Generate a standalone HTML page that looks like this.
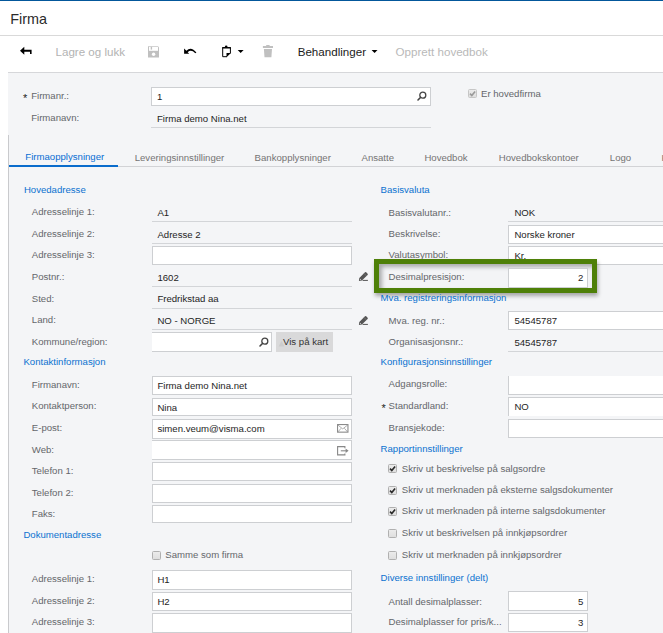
<!DOCTYPE html>
<html><head><meta charset="utf-8"><style>
html,body{margin:0;padding:0;}
body{width:663px;height:633px;position:relative;overflow:hidden;background:#fff;font-family:"Liberation Sans", sans-serif;}
.t{position:absolute;white-space:nowrap;line-height:1;}
.r{position:absolute;}
</style></head><body>
<div class="r" style="left:0.00px;top:0.00px;width:663.00px;height:1.00px;background:#03579b"></div>
<div class="t" style="left:10.20px;top:11.81px;font-size:14.4px;color:#2b2b2b;">Firma</div>
<div class="r" style="left:0.00px;top:35.00px;width:663.00px;height:1.00px;background:#d9d9d9"></div>
<div class="r" style="left:8.00px;top:72.00px;width:655.00px;height:561.00px;background:#f4f5f7;border-top:1px solid #d6d7da;box-sizing:border-box"></div>
<div class="r" style="left:8.00px;top:135.00px;width:1.00px;height:498.00px;background:#c9cacd"></div>
<div class="t" style="left:55.50px;top:46.18px;font-size:11.6px;color:#b3b3b3;">Lagre og lukk</div>
<div class="t" style="left:297.70px;top:46.18px;font-size:11.6px;color:#1a1a1a;">Behandlinger</div>
<div class="t" style="left:395.60px;top:46.18px;font-size:11.6px;color:#b9b9b9;">Opprett hovedbok</div>
<svg class="r" style="left:0;top:0" width="663" height="72" viewBox="0 0 663 72">
<path d="M20 50.8 L24.3 46.8 L24.3 49.8 L31.6 49.8 L31.6 54 L30 54 L30 51.8 L24.3 51.8 L24.3 54.8 Z" fill="#000"/>
<path d="M148 46.2 H158 L159 47.2 V57.4 H148 Z" fill="#c0c0c0"/>
<rect x="149" y="46.9" width="9" height="3.9" fill="#fff"/>
<rect x="150.7" y="46.8" width="1.4" height="2.8" fill="#c0c0c0"/>
<circle cx="153.6" cy="54.3" r="1.7" fill="#fff"/>
<path d="M184.1 48.5 L186.4 50.7 Q191.2 46.0 196.4 52.6 L195.3 53.2 Q191 49.0 187.7 52.3 L189.2 53.8 L184.1 53.8 Z" fill="#000"/>
<path d="M230.4 53.4 V47.8 H222.7 V56.7 H227" fill="none" stroke="#000" stroke-width="1"/>
<rect x="222.2" y="47.1" width="8.7" height="1.2" fill="#000"/>
<ellipse cx="226.2" cy="46.5" rx="1.3" ry="1.1" fill="#000"/>
<path d="M226.5 53.1 H230.9 L226.5 57.2 Z" fill="#000"/>
<path d="M237.7 50 H243.6 L240.65 52.9 Z" fill="#000"/>
<path d="M262.9 46 H273 V47.9 H262.9 Z M266.2 45 H269.6 V46 H266.2 Z M263.9 48.9 H272 L271.4 57.2 H264.5 Z" fill="#c0c0c0"/>
<path d="M371.6 50 H377.5 L374.55 52.9 Z" fill="#000"/>
</svg>
<div class="t" style="left:22.90px;top:93.49px;font-size:11px;color:#222;">*</div>
<div class="t" style="left:31.20px;top:90.77px;font-size:9.6px;color:#64676b;">Firmanr.:</div>
<div class="r" style="left:151.00px;top:87.00px;width:280.00px;height:19.00px;background:#fff;box-sizing:border-box;border-top:1px solid #cdcfd2;border-bottom:1px solid #cdcfd2;border-left:1px solid #cdcfd2;border-right:1px solid #cdcfd2"></div>
<div class="t" style="left:157.00px;top:91.77px;font-size:9.6px;color:#1e1e1e;">1</div>
<div class="t" style="left:31.20px;top:112.67px;font-size:9.6px;color:#64676b;">Firmanavn:</div>
<div class="t" style="left:157.00px;top:113.77px;font-size:9.6px;color:#1e1e1e;">Firma demo Nina.net</div>
<div class="r" style="left:151.00px;top:127.00px;width:280.00px;height:1.00px;background:#d3d5d8"></div>
<svg class="r" style="left:415.50px;top:89.80px" width="12" height="12" viewBox="0 0 12 12"><circle cx="6.8" cy="5.2" r="3" fill="none" stroke="#444" stroke-width="1.3"/><path d="M4.7 7.3 L2 10" stroke="#444" stroke-width="1.6" stroke-linecap="round"/></svg>
<svg class="r" style="left:468.00px;top:89.00px" width="9" height="9" viewBox="0 0 9 9"><defs><linearGradient id="g" x1="0" y1="0" x2="0" y2="1"><stop offset="0" stop-color="#ececec"/><stop offset="1" stop-color="#dedede"/></linearGradient></defs><rect x="0.5" y="0.5" width="8" height="8" rx="1" fill="url(#g)" stroke="#c6c6c6"/><path d="M2 4.6 L3.8 6.5 L7.1 2.4" fill="none" stroke="#9a9a9a" stroke-width="1.6"/></svg>
<div class="t" style="left:481.00px;top:88.87px;font-size:9.6px;color:#64676b;">Er hovedfirma</div>
<div class="t" style="left:25.30px;top:152.27px;font-size:9.6px;color:#086ed4;">Firmaopplysninger</div>
<div class="t" style="left:134.70px;top:153.07px;font-size:9.6px;color:#747474;">Leveringsinnstillinger</div>
<div class="t" style="left:254.60px;top:153.07px;font-size:9.6px;color:#747474;">Bankopplysninger</div>
<div class="t" style="left:361.50px;top:153.07px;font-size:9.6px;color:#747474;">Ansatte</div>
<div class="t" style="left:424.40px;top:153.07px;font-size:9.6px;color:#747474;">Hovedbok</div>
<div class="t" style="left:498.80px;top:153.07px;font-size:9.6px;color:#747474;">Hovedbokskontoer</div>
<div class="t" style="left:609.80px;top:153.07px;font-size:9.6px;color:#747474;">Logo</div>
<div class="t" style="left:661.50px;top:153.07px;font-size:9.6px;color:#747474;">Kontakt</div>
<div class="r" style="left:9.00px;top:166.00px;width:654.00px;height:1.00px;background:#d2d3d6"></div>
<div class="r" style="left:9.00px;top:165.00px;width:109.00px;height:2.00px;background:#0a6ccc"></div>
<div class="t" style="left:23.90px;top:185.07px;font-size:9.6px;color:#0b72d0;">Hovedadresse</div>
<div class="t" style="left:31.80px;top:207.27px;font-size:9.6px;color:#64676b;">Adresselinje 1:</div>
<div class="t" style="left:157.40px;top:208.27px;font-size:9.6px;color:#1e1e1e;">A1</div>
<div class="r" style="left:152.00px;top:221.00px;width:200.00px;height:1.00px;background:#d3d5d8"></div>
<div class="t" style="left:31.80px;top:229.17px;font-size:9.6px;color:#64676b;">Adresselinje 2:</div>
<div class="t" style="left:157.40px;top:230.07px;font-size:9.6px;color:#1e1e1e;">Adresse 2</div>
<div class="r" style="left:152.00px;top:243.00px;width:200.00px;height:1.00px;background:#d3d5d8"></div>
<div class="t" style="left:31.80px;top:249.87px;font-size:9.6px;color:#64676b;">Adresselinje 3:</div>
<div class="r" style="left:152.00px;top:246.00px;width:200.00px;height:19.00px;background:#fff;box-sizing:border-box;border-top:1px solid #cdcfd2;border-bottom:1px solid #cdcfd2;border-left:1px solid #cdcfd2;border-right:1px solid #cdcfd2"></div>
<div class="t" style="left:31.80px;top:271.77px;font-size:9.6px;color:#64676b;">Postnr.:</div>
<div class="t" style="left:157.40px;top:272.67px;font-size:9.6px;color:#1e1e1e;">1602</div>
<div class="r" style="left:152.00px;top:286.00px;width:200.00px;height:1.00px;background:#d3d5d8"></div>
<div class="t" style="left:31.80px;top:293.97px;font-size:9.6px;color:#64676b;">Sted:</div>
<div class="t" style="left:157.40px;top:294.07px;font-size:9.6px;color:#1e1e1e;">Fredrikstad aa</div>
<div class="r" style="left:152.00px;top:308.00px;width:200.00px;height:1.00px;background:#d3d5d8"></div>
<div class="t" style="left:31.80px;top:315.27px;font-size:9.6px;color:#64676b;">Land:</div>
<div class="t" style="left:157.40px;top:316.27px;font-size:9.6px;color:#1e1e1e;">NO - NORGE</div>
<div class="r" style="left:152.00px;top:329.00px;width:200.00px;height:1.00px;background:#d3d5d8"></div>
<div class="t" style="left:31.80px;top:336.57px;font-size:9.6px;color:#64676b;">Kommune/region:</div>
<div class="r" style="left:152.00px;top:332.00px;width:120.00px;height:20.00px;background:#fff;box-sizing:border-box;border-top:1px solid #cdcfd2;border-bottom:1px solid #cdcfd2;border-left:0;border-right:1px solid #cdcfd2"></div>
<svg class="r" style="left:257.50px;top:335.80px" width="12" height="12" viewBox="0 0 12 12"><circle cx="6.8" cy="5.2" r="3" fill="none" stroke="#444" stroke-width="1.3"/><path d="M4.7 7.3 L2 10" stroke="#444" stroke-width="1.6" stroke-linecap="round"/></svg>
<div class="r" style="left:276.00px;top:332.00px;width:57.00px;height:20.00px;background:#d9d9da"></div>
<svg class="r" style="left:277px;top:336px" width="10" height="12" viewBox="0 0 10 12"><path d="M1.5 10.5 L4.5 5 L7.5 10.5 Z" fill="#cdcdcd"/></svg>
<div class="t" style="left:283.00px;top:337.17px;font-size:9.6px;color:#333;">Vis på kart</div>
<svg class="r" style="left:356.00px;top:269.00px" width="16" height="16" viewBox="0 0 16 16"><path d="M2.9 12.0 L3.3 9.0 L9.0 3.3 Q9.6 2.7 10.2 3.3 L11.6 4.7 Q12.2 5.3 11.6 5.9 L5.9 11.6 Z" fill="#555"/><path d="M3.9 11.0 L4.2 9.8 L5.1 10.7 Z" fill="#f4f5f7"/><path d="M8.0 4.4 L10.5 6.9" stroke="#888" stroke-width="0.6"/><rect x="6.6" y="10.9" width="5.3" height="1.0" fill="#555"/></svg>
<svg class="r" style="left:356.00px;top:313.00px" width="16" height="16" viewBox="0 0 16 16"><path d="M2.9 12.0 L3.3 9.0 L9.0 3.3 Q9.6 2.7 10.2 3.3 L11.6 4.7 Q12.2 5.3 11.6 5.9 L5.9 11.6 Z" fill="#555"/><path d="M3.9 11.0 L4.2 9.8 L5.1 10.7 Z" fill="#f4f5f7"/><path d="M8.0 4.4 L10.5 6.9" stroke="#888" stroke-width="0.6"/><rect x="6.6" y="10.9" width="5.3" height="1.0" fill="#555"/></svg>
<div class="t" style="left:23.40px;top:357.27px;font-size:9.6px;color:#0b72d0;">Kontaktinformasjon</div>
<div class="t" style="left:31.80px;top:380.47px;font-size:9.6px;color:#64676b;">Firmanavn:</div>
<div class="r" style="left:152.00px;top:376.00px;width:200.00px;height:19.00px;background:#fff;box-sizing:border-box;border-top:1px solid #cdcfd2;border-bottom:1px solid #cdcfd2;border-left:1px solid #cdcfd2;border-right:1px solid #cdcfd2"></div>
<div class="t" style="left:157.40px;top:381.17px;font-size:9.6px;color:#1e1e1e;">Firma demo Nina.net</div>
<div class="t" style="left:31.80px;top:401.07px;font-size:9.6px;color:#64676b;">Kontaktperson:</div>
<div class="r" style="left:152.00px;top:398.00px;width:200.00px;height:18.00px;background:#fff;box-sizing:border-box;border-top:1px solid #cdcfd2;border-bottom:1px solid #cdcfd2;border-left:1px solid #cdcfd2;border-right:1px solid #cdcfd2"></div>
<div class="t" style="left:157.40px;top:402.67px;font-size:9.6px;color:#1e1e1e;">Nina</div>
<div class="t" style="left:31.80px;top:423.27px;font-size:9.6px;color:#64676b;">E-post:</div>
<div class="r" style="left:152.00px;top:419.00px;width:200.00px;height:20.00px;background:#fff;box-sizing:border-box;border-top:1px solid #cdcfd2;border-bottom:1px solid #cdcfd2;border-left:1px solid #cdcfd2;border-right:1px solid #cdcfd2"></div>
<div class="t" style="left:157.40px;top:424.47px;font-size:9.6px;color:#1e1e1e;">simen.veum@visma.com</div>
<div class="t" style="left:31.80px;top:444.77px;font-size:9.6px;color:#64676b;">Web:</div>
<div class="r" style="left:152.00px;top:440.00px;width:200.00px;height:20.00px;background:#fff;box-sizing:border-box;border-top:1px solid #cdcfd2;border-bottom:1px solid #cdcfd2;border-left:0;border-right:1px solid #cdcfd2"></div>
<div class="t" style="left:31.80px;top:466.27px;font-size:9.6px;color:#64676b;">Telefon 1:</div>
<div class="r" style="left:152.00px;top:462.00px;width:200.00px;height:19.00px;background:#fff;box-sizing:border-box;border-top:1px solid #cdcfd2;border-bottom:1px solid #cdcfd2;border-left:1px solid #cdcfd2;border-right:1px solid #cdcfd2"></div>
<div class="t" style="left:31.80px;top:488.17px;font-size:9.6px;color:#64676b;">Telefon 2:</div>
<div class="r" style="left:152.00px;top:484.00px;width:200.00px;height:19.00px;background:#fff;box-sizing:border-box;border-top:1px solid #cdcfd2;border-bottom:1px solid #cdcfd2;border-left:1px solid #cdcfd2;border-right:1px solid #cdcfd2"></div>
<div class="t" style="left:31.80px;top:508.87px;font-size:9.6px;color:#64676b;">Faks:</div>
<div class="r" style="left:152.00px;top:505.00px;width:200.00px;height:18.00px;background:#fff;box-sizing:border-box;border-top:1px solid #cdcfd2;border-bottom:1px solid #cdcfd2;border-left:1px solid #cdcfd2;border-right:1px solid #cdcfd2"></div>
<svg class="r" style="left:336.5px;top:424px" width="12" height="9" viewBox="0 0 12 9"><rect x="0.55" y="0.55" width="10.4" height="7.6" fill="none" stroke="#8a8a8a" stroke-width="1.1"/><path d="M0.6 0.8 L5.75 4.9 L10.9 0.8 M0.8 8 L4.2 4.2 M10.7 8 L7.3 4.2" fill="none" stroke="#9a9a9a" stroke-width="0.8"/></svg>
<svg class="r" style="left:337px;top:445.5px" width="12" height="10" viewBox="0 0 12 10"><path d="M7.9 2.2 V0.6 H0.6 V8.9 H7.9 V7.4" fill="none" stroke="#888" stroke-width="1.1"/><path d="M3.8 4.8 H9" stroke="#888" stroke-width="1.1"/><path d="M8.6 2.6 L11.6 4.8 L8.6 7 Z" fill="#888"/></svg>
<div class="t" style="left:23.40px;top:530.27px;font-size:9.6px;color:#0b72d0;">Dokumentadresse</div>
<svg class="r" style="left:152.30px;top:551.10px" width="9" height="9" viewBox="0 0 9 9"><defs><linearGradient id="g" x1="0" y1="0" x2="0" y2="1"><stop offset="0" stop-color="#ececec"/><stop offset="1" stop-color="#dedede"/></linearGradient></defs><rect x="0.5" y="0.5" width="8" height="8" rx="1" fill="url(#g)" stroke="#b0b0b0"/></svg>
<div class="t" style="left:165.30px;top:550.07px;font-size:9.6px;color:#64676b;">Samme som firma</div>
<div class="t" style="left:31.80px;top:573.87px;font-size:9.6px;color:#64676b;">Adresselinje 1:</div>
<div class="r" style="left:152.00px;top:570.00px;width:200.00px;height:20.00px;background:#fff;box-sizing:border-box;border-top:1px solid #cdcfd2;border-bottom:1px solid #cdcfd2;border-left:1px solid #cdcfd2;border-right:1px solid #cdcfd2"></div>
<div class="t" style="left:157.40px;top:575.27px;font-size:9.6px;color:#1e1e1e;">H1</div>
<div class="t" style="left:31.80px;top:596.27px;font-size:9.6px;color:#64676b;">Adresselinje 2:</div>
<div class="r" style="left:152.00px;top:592.00px;width:200.00px;height:19.00px;background:#fff;box-sizing:border-box;border-top:1px solid #cdcfd2;border-bottom:1px solid #cdcfd2;border-left:1px solid #cdcfd2;border-right:1px solid #cdcfd2"></div>
<div class="t" style="left:157.40px;top:596.97px;font-size:9.6px;color:#1e1e1e;">H2</div>
<div class="t" style="left:31.80px;top:617.27px;font-size:9.6px;color:#64676b;">Adresselinje 3:</div>
<div class="r" style="left:152.00px;top:613.00px;width:200.00px;height:20.00px;background:#fff;box-sizing:border-box;border-top:1px solid #cdcfd2;border-bottom:1px solid #cdcfd2;border-left:1px solid #cdcfd2;border-right:1px solid #cdcfd2"></div>
<div class="t" style="left:380.60px;top:185.07px;font-size:9.6px;color:#0b72d0;">Basisvaluta</div>
<div class="t" style="left:388.60px;top:207.87px;font-size:9.6px;color:#64676b;">Basisvalutanr.:</div>
<div class="t" style="left:514.40px;top:208.07px;font-size:9.6px;color:#1e1e1e;">NOK</div>
<div class="r" style="left:508.00px;top:221.00px;width:200.00px;height:1.00px;background:#d3d5d8"></div>
<div class="t" style="left:388.60px;top:229.17px;font-size:9.6px;color:#64676b;">Beskrivelse:</div>
<div class="r" style="left:508.00px;top:225.00px;width:213.00px;height:19.00px;background:#fff;box-sizing:border-box;border-top:1px solid #cdcfd2;border-bottom:1px solid #cdcfd2;border-left:1px solid #cdcfd2;border-right:1px solid #cdcfd2"></div>
<div class="t" style="left:514.40px;top:230.27px;font-size:9.6px;color:#1e1e1e;">Norske kroner</div>
<div class="t" style="left:388.60px;top:250.27px;font-size:9.6px;color:#64676b;">Valutasymbol:</div>
<div class="r" style="left:508.00px;top:246.00px;width:213.00px;height:19.00px;background:#fff;box-sizing:border-box;border-top:1px solid #cdcfd2;border-bottom:1px solid #cdcfd2;border-left:1px solid #cdcfd2;border-right:1px solid #cdcfd2"></div>
<div class="t" style="left:514.40px;top:251.47px;font-size:9.6px;color:#1e1e1e;">Kr.</div>
<div class="r" style="left:374.00px;top:259.20px;width:223.00px;height:33.60px;border:5px solid #4e8008;box-sizing:border-box;background:#f3f4f6;box-shadow:1px 3px 4px rgba(0,0,0,0.32), inset 3px 3px 4px rgba(0,0,0,0.3)"></div>
<div class="t" style="left:388.60px;top:272.27px;font-size:9.6px;color:#64676b;">Desimalpresisjon:</div>
<div class="r" style="left:508.00px;top:268.00px;width:80.00px;height:20.00px;background:#fff;box-sizing:border-box;border-top:1px solid #cdcfd2;border-bottom:1px solid #cdcfd2;border-left:1px solid #cdcfd2;border-right:1px solid #cdcfd2"></div>
<div class="t" style="right:79.60px;top:273.47px;font-size:9.6px;color:#1e1e1e;">2</div>
<div class="t" style="left:380.60px;top:292.77px;font-size:9.6px;color:#0b72d0;">Mva. registreringsinformasjon</div>
<div class="t" style="left:388.60px;top:316.27px;font-size:9.6px;color:#64676b;">Mva. reg. nr.:</div>
<div class="r" style="left:508.00px;top:311.00px;width:213.00px;height:19.00px;background:#fff;box-sizing:border-box;border-top:1px solid #cdcfd2;border-bottom:1px solid #cdcfd2;border-left:1px solid #cdcfd2;border-right:1px solid #cdcfd2"></div>
<div class="t" style="left:514.40px;top:315.97px;font-size:9.6px;color:#1e1e1e;">54545787</div>
<div class="t" style="left:388.60px;top:337.27px;font-size:9.6px;color:#64676b;">Organisasjonsnr.:</div>
<div class="t" style="left:514.40px;top:338.27px;font-size:9.6px;color:#1e1e1e;">54545787</div>
<div class="r" style="left:508.00px;top:351.00px;width:200.00px;height:1.00px;background:#d3d5d8"></div>
<div class="t" style="left:380.60px;top:356.87px;font-size:9.6px;color:#0b72d0;">Konfigurasjonsinnstillinger</div>
<div class="t" style="left:388.60px;top:379.27px;font-size:9.6px;color:#64676b;">Adgangsrolle:</div>
<div class="r" style="left:508.00px;top:376.00px;width:213.00px;height:19.00px;background:#fff;box-sizing:border-box;border-top:0;border-bottom:1px solid #cdcfd2;border-left:1px solid #cdcfd2;border-right:1px solid #cdcfd2"></div>
<div class="t" style="left:381.60px;top:402.79px;font-size:11px;color:#222;">*</div>
<div class="t" style="left:388.60px;top:401.47px;font-size:9.6px;color:#64676b;">Standardland:</div>
<div class="r" style="left:508.00px;top:397.00px;width:213.00px;height:19.00px;background:#fff;box-sizing:border-box;border-top:1px solid #cdcfd2;border-bottom:0;border-left:1px solid #cdcfd2;border-right:1px solid #cdcfd2"></div>
<div class="t" style="left:514.40px;top:401.97px;font-size:9.6px;color:#1e1e1e;">NO</div>
<div class="t" style="left:388.60px;top:422.67px;font-size:9.6px;color:#64676b;">Bransjekode:</div>
<div class="r" style="left:508.00px;top:419.00px;width:213.00px;height:19.00px;background:#fff;box-sizing:border-box;border-top:1px solid #cdcfd2;border-bottom:1px solid #cdcfd2;border-left:1px solid #cdcfd2;border-right:1px solid #cdcfd2"></div>
<div class="t" style="left:380.60px;top:444.07px;font-size:9.6px;color:#0b72d0;">Rapportinnstillinger</div>
<svg class="r" style="left:388.20px;top:464.40px" width="9" height="9" viewBox="0 0 9 9"><defs><linearGradient id="g" x1="0" y1="0" x2="0" y2="1"><stop offset="0" stop-color="#ececec"/><stop offset="1" stop-color="#dedede"/></linearGradient></defs><rect x="0.5" y="0.5" width="8" height="8" rx="1" fill="url(#g)" stroke="#b0b0b0"/><path d="M2 4.6 L3.8 6.5 L7.1 2.4" fill="none" stroke="#2a2a2a" stroke-width="1.6"/></svg>
<div class="t" style="left:401.80px;top:464.17px;font-size:9.6px;color:#64676b;">Skriv ut beskrivelse på salgsordre</div>
<svg class="r" style="left:388.20px;top:485.90px" width="9" height="9" viewBox="0 0 9 9"><defs><linearGradient id="g" x1="0" y1="0" x2="0" y2="1"><stop offset="0" stop-color="#ececec"/><stop offset="1" stop-color="#dedede"/></linearGradient></defs><rect x="0.5" y="0.5" width="8" height="8" rx="1" fill="url(#g)" stroke="#b0b0b0"/><path d="M2 4.6 L3.8 6.5 L7.1 2.4" fill="none" stroke="#2a2a2a" stroke-width="1.6"/></svg>
<div class="t" style="left:401.80px;top:485.47px;font-size:9.6px;color:#64676b;">Skriv ut merknaden på eksterne salgsdokumenter</div>
<svg class="r" style="left:388.20px;top:507.30px" width="9" height="9" viewBox="0 0 9 9"><defs><linearGradient id="g" x1="0" y1="0" x2="0" y2="1"><stop offset="0" stop-color="#ececec"/><stop offset="1" stop-color="#dedede"/></linearGradient></defs><rect x="0.5" y="0.5" width="8" height="8" rx="1" fill="url(#g)" stroke="#b0b0b0"/><path d="M2 4.6 L3.8 6.5 L7.1 2.4" fill="none" stroke="#2a2a2a" stroke-width="1.6"/></svg>
<div class="t" style="left:401.80px;top:506.47px;font-size:9.6px;color:#64676b;">Skriv ut merknaden på interne salgsdokumenter</div>
<svg class="r" style="left:388.20px;top:529.10px" width="9" height="9" viewBox="0 0 9 9"><defs><linearGradient id="g" x1="0" y1="0" x2="0" y2="1"><stop offset="0" stop-color="#ececec"/><stop offset="1" stop-color="#dedede"/></linearGradient></defs><rect x="0.5" y="0.5" width="8" height="8" rx="1" fill="url(#g)" stroke="#b0b0b0"/></svg>
<div class="t" style="left:401.80px;top:528.27px;font-size:9.6px;color:#64676b;">Skriv ut beskrivelsen på innkjøpsordrer</div>
<svg class="r" style="left:388.20px;top:550.80px" width="9" height="9" viewBox="0 0 9 9"><defs><linearGradient id="g" x1="0" y1="0" x2="0" y2="1"><stop offset="0" stop-color="#ececec"/><stop offset="1" stop-color="#dedede"/></linearGradient></defs><rect x="0.5" y="0.5" width="8" height="8" rx="1" fill="url(#g)" stroke="#b0b0b0"/></svg>
<div class="t" style="left:401.80px;top:550.37px;font-size:9.6px;color:#64676b;">Skriv ut merknaden på innkjøpsordrer</div>
<div class="t" style="left:380.60px;top:573.17px;font-size:9.6px;color:#0b72d0;">Diverse innstillinger (delt)</div>
<div class="t" style="left:388.60px;top:596.57px;font-size:9.6px;color:#64676b;">Antall desimalplasser:</div>
<div class="r" style="left:508.00px;top:591.00px;width:80.00px;height:20.00px;background:#fff;box-sizing:border-box;border-top:1px solid #cdcfd2;border-bottom:1px solid #cdcfd2;border-left:1px solid #cdcfd2;border-right:1px solid #cdcfd2"></div>
<div class="t" style="right:79.60px;top:597.07px;font-size:9.6px;color:#1e1e1e;">5</div>
<div class="t" style="left:388.60px;top:617.27px;font-size:9.6px;color:#64676b;">Desimalplasser for pris/k...</div>
<div class="r" style="left:508.00px;top:613.00px;width:80.00px;height:19.00px;background:#fff;box-sizing:border-box;border-top:1px solid #cdcfd2;border-bottom:1px solid #cdcfd2;border-left:1px solid #cdcfd2;border-right:1px solid #cdcfd2"></div>
<div class="t" style="right:79.60px;top:617.87px;font-size:9.6px;color:#1e1e1e;">3</div>
</body></html>
